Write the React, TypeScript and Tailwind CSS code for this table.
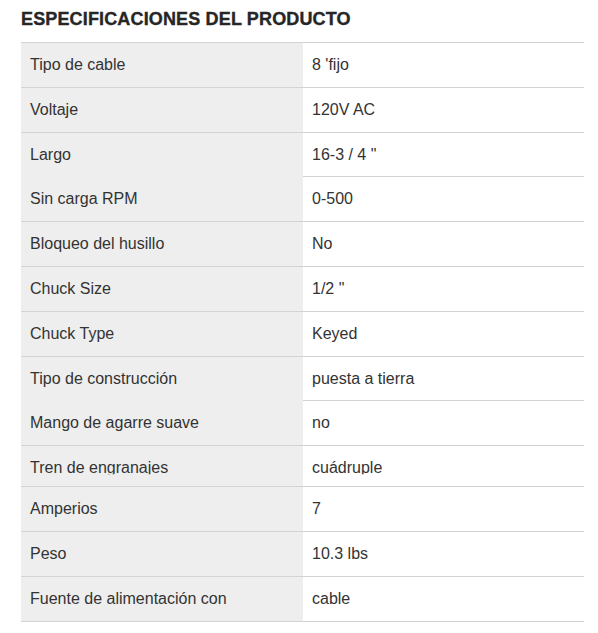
const specs = [
  { label: "Tipo de cable", value: "8 'fijo" },
  { label: "Voltaje", value: "120V AC" },
  { label: "Largo", value: '16-3 / 4 "' },
  { label: "Sin carga RPM", value: "0-500" },
  { label: "Bloqueo del husillo", value: "No" },
  { label: "Chuck Size", value: '1/2 "' },
  { label: "Chuck Type", value: "Keyed" },
  { label: "Tipo de construcción", value: "puesta a tierra" },
  { label: "Mango de agarre suave", value: "no" },
  { label: "Tren de engranajes", value: "cuádruple", short: true },
  { label: "Amperios", value: "7" },
  { label: "Peso", value: "10.3 lbs" },
  { label: "Fuente de alimentación con", value: "cable" },
];

export default function App() {
  return (
    <div className="min-h-screen bg-white font-['Liberation_Sans',Arial,sans-serif] text-[#333]">
      <div className="pl-[21px] pr-[14px] pt-[8px]">
        <h2 className="h-[34px] text-[18px] font-bold uppercase leading-[22px] tracking-[0.15px] text-[#262626] [-webkit-text-stroke:0.35px_#262626]">
          Especificaciones del producto
        </h2>

        <div className="border-t border-[#d3d3d3]">
          {specs.map((s) => (
            <div
              key={s.label}
              className={
                s.short
                  ? "flex h-[41px] overflow-hidden border-b border-[#d3d3d3] text-[16px]"
                  : "flex h-[44.8px] border-b border-[#d3d3d3] text-[16px]"
              }
            >
              <div className="flex h-[44px] w-[282px] shrink-0 items-center bg-[#eeeeee] pl-[9px]">
                {/* the source cuts descenders off in this one row */}
                <span className={s.short ? "block h-[18px] leading-[18px] [clip-path:inset(0_0_3px_0)]" : ""}>
                  {s.label}
                </span>
              </div>
              <div className="flex h-[44px] flex-1 items-center pl-[9px]">
                <span className={s.short ? "block h-[18px] leading-[18px] [clip-path:inset(0_0_3px_0)]" : ""}>
                  {s.value}
                </span>
              </div>
            </div>
          ))}
        </div>
      </div>
    </div>
  );
}
